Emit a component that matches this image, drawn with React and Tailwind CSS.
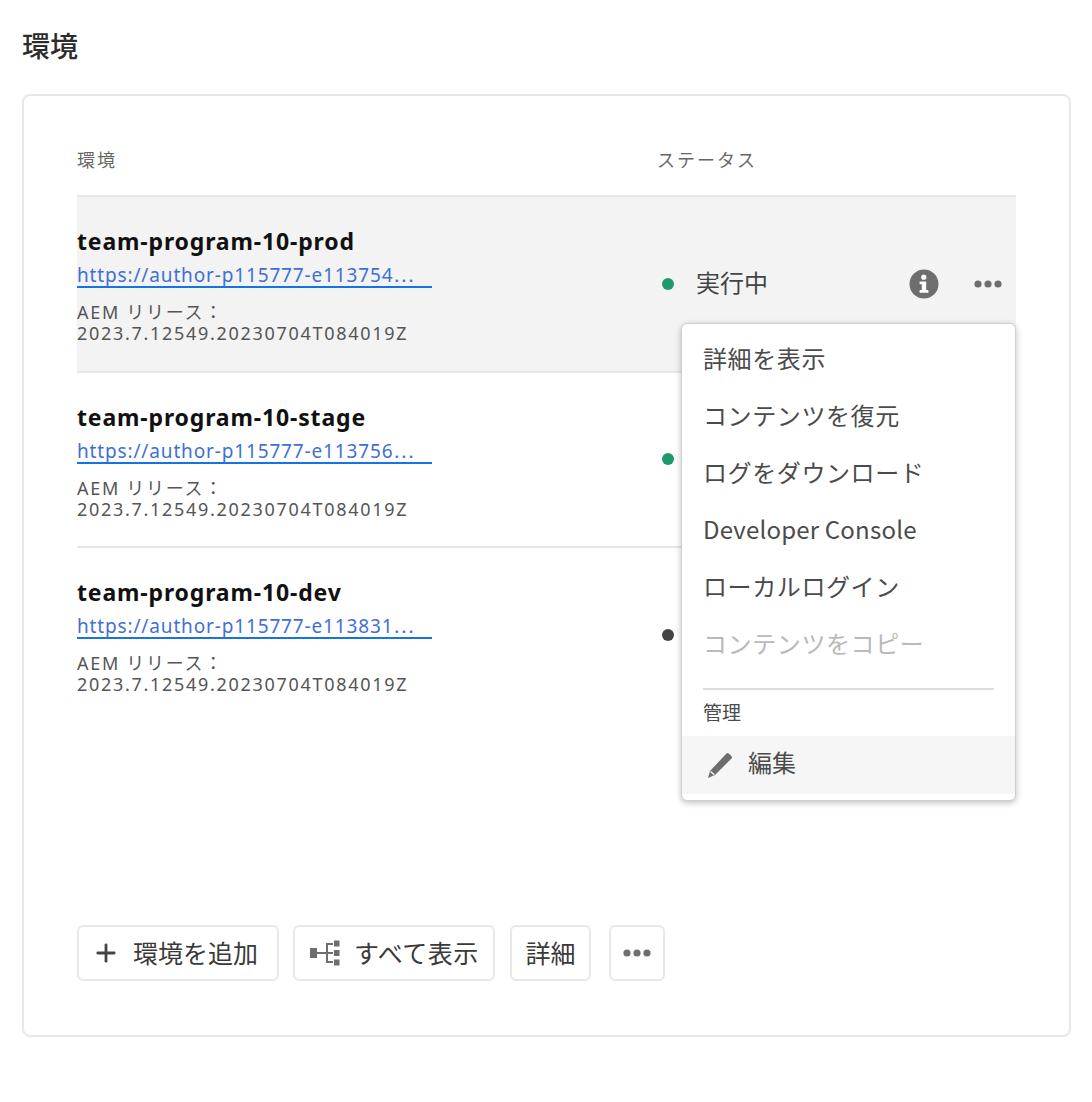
import { Plus } from 'lucide-react';

const FONT = "font-['Noto_Sans_CJK_JP','Noto_Sans',sans-serif]";
const LATIN = "font-['Noto_Sans','Noto_Sans_CJK_JP',sans-serif]";

const ENVIRONMENTS = [
    { name: 'team-program-10-prod', url: 'https://author-p115777-e113754', status: '実行中', dot: 'bg-[#1d9a6c]', active: true },
    { name: 'team-program-10-stage', url: 'https://author-p115777-e113756', status: '実行中', dot: 'bg-[#1d9a6c]' },
    { name: 'team-program-10-dev', url: 'https://author-p115777-e113831', status: '', dot: 'bg-[#444444]' },
];

const MENU_ITEMS = [
    { label: '詳細を表示', tracking: 'tracking-[0.6px]' },
    { label: 'コンテンツを復元', tracking: 'tracking-[0.6px]' },
    { label: 'ログをダウンロード', tracking: 'tracking-[0.6px]' },
    { label: 'Developer Console', tracking: 'tracking-[0.2px]' },
    { label: 'ローカルログイン', tracking: 'tracking-[0.6px]' },
];

function Dots() {
    return (
        <svg width="30" height="8" viewBox="0 0 30 8" className="fill-[#6e6e6e]">
            <circle cx="5" cy="4" r="3.6" />
            <circle cx="15" cy="4" r="3.6" />
            <circle cx="25" cy="4" r="3.6" />
        </svg>
    );
}

function InfoIcon() {
    return (
        <svg width="30" height="30" viewBox="0 0 30 30">
            <circle cx="15" cy="15" r="14.5" fill="#6e6e6e" />
            <circle cx="14.8" cy="8.2" r="2.6" fill="#fff" />
            <path d="M10.6 12.4h6.6v8.6h2.2v2.8h-8.8V21h2.2v-5.8h-2.2z" fill="#fff" />
        </svg>
    );
}

function TreeIcon() {
    return (
        <svg width="31" height="26" viewBox="0 0 31 26" className="fill-[#6e6e6e]">
            <rect x="1" y="8" width="7" height="10" />
            <rect x="8" y="12" width="9" height="2" />
            <rect x="17" y="3" width="2" height="20" />
            <rect x="19" y="3" width="5" height="2" />
            <rect x="19" y="12" width="5" height="2" />
            <rect x="19" y="21" width="5" height="2" />
            <rect x="25" y="0.5" width="5.5" height="6" />
            <rect x="25" y="10" width="5.5" height="6" />
            <rect x="25" y="19.5" width="5.5" height="6" />
        </svg>
    );
}

function PencilIcon() {
    return (
        <svg width="27" height="27" viewBox="0 0 27 27" className="fill-[#6e6e6e]">
            <path d="M20.5 1.5a1.6 1.6 0 0 1 2.2 0l2.8 2.8a1.6 1.6 0 0 1 0 2.2L9 23l-7 3 2-7z" />
            <path d="M4.6 19.4l3.6 3.4" className="stroke-[#f6f6f6]" strokeWidth="1.4" fill="none" />
        </svg>
    );
}

function Button({ children, className }) {
    return (
        <button className={`h-[56px] flex items-center rounded-[6px] border-2 border-[#e8e8e8] bg-white text-[25px] text-[#3a3a3a] ${className}`}>
            {children}
        </button>
    );
}

function EnvRow({ env }) {
    return (
        <div className={`h-[175.5px] border-t-2 border-[#e6e6e6] flex ${env.active ? 'bg-[#f3f3f3]' : ''}`}>
            <div className={`${LATIN} w-[355px] pt-[28px]`}>
                <div className="text-[23px] leading-[32px] font-bold text-[#111111] tracking-[0.85px] whitespace-nowrap">{env.name}</div>
                <a className="block h-[31px] border-b-2 border-[#1473e6] text-[19px] leading-[33px] text-[#3f6fd8] whitespace-nowrap tracking-[0.85px]">
                    {env.url}<span className={FONT}>⋯</span>
                </a>
                <div className="mt-[14px] text-[18px] leading-[21px] text-[#555555] tracking-[1.7px]">
                    <div>AEM リリース：</div>
                    <div>2023.7.12549.20230704T084019Z</div>
                </div>
            </div>
            <div className="flex-1 pl-[230px] flex items-center">
                <span className={`w-[12px] h-[12px] rounded-full ${env.dot}`} />
                <span className="ml-[22px] pb-[4px] text-[24px] text-[#444444]">{env.status}</span>
                {env.active && (
                    <div className="ml-auto mr-[13px] flex items-center gap-[34px]">
                        <InfoIcon />
                        <Dots />
                    </div>
                )}
            </div>
        </div>
    );
}

export default function App() {
    return (
        <div className={`${FONT} w-[1092px] h-[1102px] bg-white pt-[23px] pl-[22px]`}>
            <h1 className="text-[28px] leading-[44px] font-medium text-[#2c2c2c]">環境</h1>
            <div className="relative mt-[27px] w-[1049px] h-[943px] rounded-[8px] border-2 border-[#e8e8e8] pl-[53px] pt-[51px]">
                <div className="flex h-[48px] text-[18px] leading-[24px] text-[#666666] tracking-[2px]">
                    <div className="w-[580px]">環境</div>
                    <div>ステータス</div>
                </div>
                <div className="w-[939px]">
                    {ENVIRONMENTS.map(env => <EnvRow key={env.name} env={env} />)}
                </div>

                <div className="absolute left-[657px] top-[227px] w-[335px] h-[478px] rounded-[6px] border border-[#cfcfcf] bg-white shadow-[0_2px_6px_rgba(0,0,0,0.25)] pt-[5px]">
                    {MENU_ITEMS.map(item => (
                        <div key={item.label} className={`h-[57px] pl-[21px] flex items-center text-[24px] text-[#4b4b4b] ${item.tracking}`}>{item.label}</div>
                    ))}
                    <div className="h-[57px] pl-[21px] flex items-center text-[24px] text-[#b9b9b9] tracking-[0.6px]">コンテンツをコピー</div>
                    <div className="mx-[21px] mt-[17px] border-t-2 border-[#dddddd]" />
                    <div className="pl-[21px] h-[46px] pb-[2px] flex items-center text-[19px] text-[#4b4b4b]">管理</div>
                    <div className="h-[58px] mb-[6px] bg-[#f6f6f6] pl-[24px] flex items-center gap-[15px] text-[24px] text-[#4b4b4b]">
                        <PencilIcon />
                        <span className="pb-[6px]">編集</span>
                    </div>
                </div>

                <div className="absolute left-[53px] top-[829px] flex">
                    <Button className="w-[202px] pl-[13px]">
                        <Plus size={28} strokeWidth={2.4} className="text-[#444444]" />
                        <span className="ml-[13px]">環境を追加</span>
                    </Button>
                    <Button className="w-[202px] ml-[14px] pl-[14px]">
                        <TreeIcon />
                        <span className="ml-[14px] tracking-[0.5px]">すべて表示</span>
                    </Button>
                    <Button className="w-[81px] ml-[15px] justify-center text-[24px]">詳細</Button>
                    <Button className="w-[56px] ml-[18px] justify-center"><Dots /></Button>
                </div>
            </div>
        </div>
    );
}
